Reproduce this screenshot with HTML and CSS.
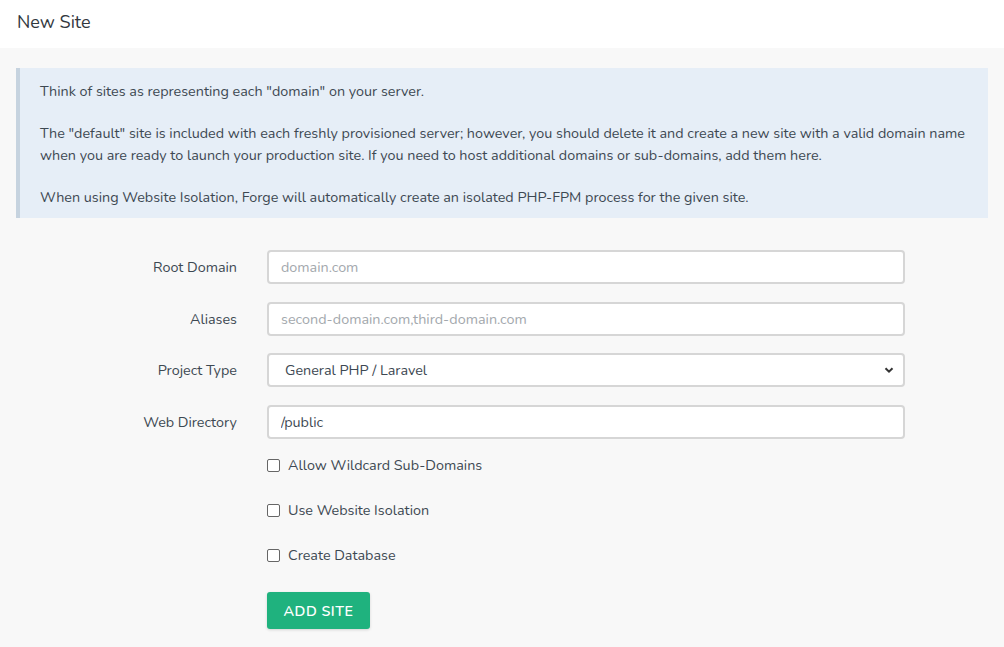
FILE: index.html
```html
<!DOCTYPE html>
<html>
<head>
<meta charset="utf-8">
<link rel="stylesheet" href="styles.css">
</head>
<body>
<div class="header">New Site</div>
<div class="content">
  <div class="info">
    <p>Think of sites as representing each "domain" on your server.</p>
    <p>The "default" site is included with each freshly provisioned server; however, you should delete it and create a new site with a valid domain name when you are ready to launch your production site. If you need to host additional domains or sub-domains, add them here.</p>
    <p>When using Website Isolation, Forge will automatically create an isolated PHP-FPM process for the given site.</p>
  </div>
  <form class="form">
    <div class="row">
      <label class="label">Root Domain</label>
      <input class="input" type="text" placeholder="domain.com">
    </div>
    <div class="row">
      <label class="label">Aliases</label>
      <input class="input" type="text" placeholder="second-domain.com,third-domain.com">
    </div>
    <div class="row">
      <label class="label">Project Type</label>
      <div class="select">
        <span>General PHP / Laravel</span>
        <svg class="chev" width="10" height="8" viewBox="0 0 10 8"><path d="M1.5 2.2 L5 5.7 L8.5 2.2" fill="none" stroke="#333" stroke-width="2"/></svg>
      </div>
    </div>
    <div class="row">
      <label class="label">Web Directory</label>
      <input class="input" type="text" value="/public">
    </div>
    <div class="checks">
      <label class="check"><span class="box"></span>Allow Wildcard Sub-Domains</label>
      <label class="check"><span class="box"></span>Use Website Isolation</label>
      <label class="check"><span class="box"></span>Create Database</label>
      <button class="btn" type="button">ADD SITE</button>
    </div>
  </form>
</div>
</body>
</html>
```
FILE: styles.css
```css
html, body {
  margin: 0;
  padding: 0;
}
body {
  background: #f8f8f8;
  font-family: "Nunito", Lato, "Open Sans", sans-serif;
  font-size: 14.35px;
  color: #3d4852;
  width: 1004px;
  height: 647px;
  overflow: hidden;
}
.header {
  background: #fff;
  height: 48px;
  box-sizing: border-box;
  padding: 10px 0 0 17px;
  font-size: 18px;
  color: #32383e;
}
.content {
  padding: 20px 16px 0 16px;
}
.info {
  background: #e6eef7;
  border-left: 4px solid #c6d3df;
  padding: 12px 20px 10px 20px;
  line-height: 22px;
}
.info p {
  margin: 0 0 20px 0;
}
.info p:last-child {
  margin: 0;
}
.form {
  padding-top: 32px;
}
.row {
  display: flex;
  align-items: center;
  height: 34px;
  margin-bottom: 17.5px;
}
.label {
  width: 221px;
  text-align: right;
  padding-right: 30px;
}
.input, .select {
  box-sizing: border-box;
  width: 638px;
  height: 34px;
  border: 2px solid #d6d6d6;
  border-radius: 4px;
  background: #fff;
  font-family: inherit;
  font-size: 14.35px;
  color: #3d4852;
  padding: 0 12px;
  outline: none;
}
.input::placeholder {
  color: #a3a8ad;
}
.select {
  display: flex;
  align-items: center;
  justify-content: space-between;
  padding: 0 9px 0 16px;
}
.checks {
  margin-left: 251px;
  margin-top: -2px;
  display: flex;
  flex-direction: column;
  align-items: flex-start;
}
.check {
  display: flex;
  align-items: center;
  height: 22px;
  margin-bottom: 23px;
}
.box {
  width: 11px;
  height: 11px;
  border: 1px solid #666;
  border-radius: 2px;
  background: #fff;
  margin-right: 8px;
}
.btn {
  margin-top: 3px;
  width: 103px;
  height: 37px;
  background: #1fb27e;
  color: #fff;
  border: none;
  border-radius: 3px;
  font-family: inherit;
  font-size: 14.35px;
  font-weight: 600;
  letter-spacing: 0.5px;
  box-shadow: 0 1px 3px rgba(0,0,0,0.15);
}
```
